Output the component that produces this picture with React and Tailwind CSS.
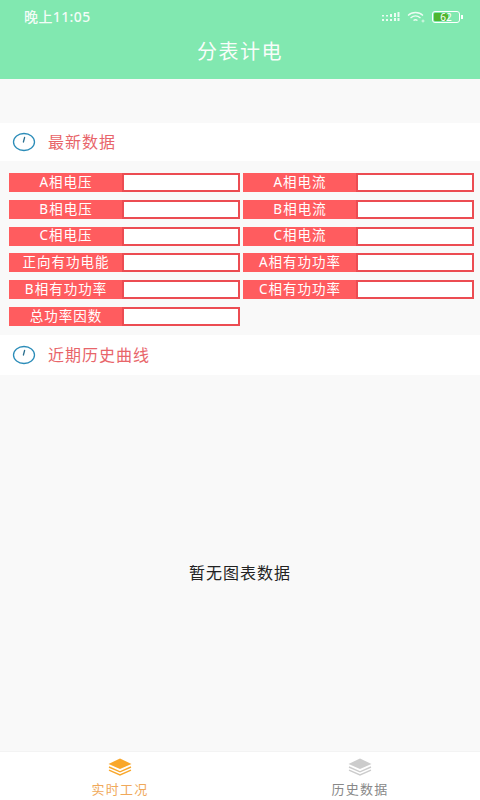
const cjk = { fontFamily: '"Noto Sans", "Noto Sans CJK SC", sans-serif' };

const fields = [
  ['A相电压', 'A相电流'],
  ['B相电压', 'B相电流'],
  ['C相电压', 'C相电流'],
  ['正向有功电能', 'A相有功功率'],
  ['B相有功功率', 'C相有功功率'],
  ['总功率因数'],
];

function Clock() {
  return (
    <svg width="24" height="20" viewBox="0 0 24 20" fill="none" className="shrink-0">
      <ellipse cx="12" cy="10" rx="10.5" ry="8.5" stroke="#2b8cb8" strokeWidth="1.3" />
      <path d="M12.6 5.5 L11.4 10" stroke="#2b6f8f" strokeWidth="1.3" strokeLinecap="round" />
    </svg>
  );
}

function SectionHead({ title, className }) {
  return (
    <div className={`flex items-center bg-white pl-3 ${className}`}>
      <Clock />
      <span className="ml-[12px] text-[16px] tracking-[1px] text-[#e8656a]">{title}</span>
    </div>
  );
}

function Field({ label }) {
  return (
    <div className="flex h-[19px] w-[231px] bg-[#ff5c5f]">
      <div className="flex w-[113px] shrink-0 items-center justify-center pl-[1px] text-[13.5px] tracking-[1px] text-white leading-none">
        {label}
      </div>
      <div className="flex-1 border-2 border-l-[2px] border-[#ec4c52] bg-white" />
    </div>
  );
}

function Layers({ color }) {
  return (
    <svg width="24" height="18" viewBox="0 0 24 18" fill="none">
      <path d="M12 0.5 L23.5 6 L12 11 L0.5 6 Z" fill={color} />
      <path d="M1 9 L12 13.8 L23 9" stroke={color} strokeWidth="1.4" />
      <path d="M1 12.2 L12 17 L23 12.2" stroke={color} strokeWidth="1.4" />
    </svg>
  );
}

export default function App() {
  return (
    <div className="flex h-[800px] w-[480px] flex-col overflow-hidden bg-[#f9f9f9]" style={cjk}>
      {/* header */}
      <div className="h-[79px] shrink-0 bg-[#81e8b0] text-white">
        <div className="flex h-[33px] items-center justify-between pl-[24px] pr-[17px]">
          <span className="text-[14px] font-medium tracking-[0.4px] opacity-90">晚上11:05</span>
          <div className="flex items-center gap-[7px]">
            <svg width="18" height="12" viewBox="0 0 18 12" fill="white" opacity="0.85">
              <rect x="0" y="8" width="2" height="2" />
              <rect x="0" y="4" width="2" height="1.5" />
              <rect x="4" y="8" width="2" height="2" />
              <rect x="4" y="4" width="2" height="1.5" />
              <rect x="8" y="8" width="2" height="2" />
              <rect x="8" y="3" width="2" height="3" />
              <rect x="12" y="7" width="2" height="3" />
              <rect x="12" y="2" width="2" height="4" />
              <rect x="15.5" y="7" width="2" height="3" />
              <rect x="15.5" y="1" width="2" height="5" />
            </svg>
            <svg width="18" height="12" viewBox="0 0 18 12" fill="none" stroke="white" opacity="0.85">
              <path d="M1 4.5 C5 0.5 12 0.5 16 4.5" strokeWidth="1.3" />
              <path d="M3.5 7 C6.5 4.5 10.5 4.5 13.5 7" strokeWidth="1.3" />
              <path d="M6.5 9.5 C7.8 8.5 9.2 8.5 10.5 9.5" strokeWidth="1.3" />
              <circle cx="16" cy="10" r="1" strokeWidth="0.8" />
            </svg>
            <div className="flex items-center">
              <div className="relative flex h-[12px] w-[28px] items-center rounded-[3px] border border-white p-[1px]">
                <div className="h-full w-[60%] rounded-[1px] bg-[#4fb52f]" />
                <span className="absolute inset-0 flex items-center justify-center text-[10px] leading-none text-white">62</span>
              </div>
              <div className="ml-[1px] h-[4px] w-[2px] bg-white" />
            </div>
          </div>
        </div>
        <div className="mt-[1px] text-center text-[20px] leading-[36px] tracking-[1.5px] opacity-95">分表计电</div>
      </div>

      <div className="h-[44px] shrink-0" />
      <SectionHead title="最新数据" className="h-[38px] shrink-0" />

      {/* data grid */}
      <div className="flex h-[171px] shrink-0 flex-col gap-[7.8px] pl-[9px] pt-[12px]">
        {fields.map((row) => (
          <div key={row[0]} className="flex gap-[3px]">
            {row.map((label) => (
              <Field key={label} label={label} />
            ))}
          </div>
        ))}
      </div>

      <div className="h-[3px] shrink-0" />
      <SectionHead title="近期历史曲线" className="h-[40px] shrink-0" />

      {/* chart area */}
      <div className="flex flex-1 items-center justify-center pt-[20px] text-[16px] tracking-[1px] text-[#222]">
        暂无图表数据
      </div>

      {/* tabs */}
      <div className="flex h-[49px] shrink-0 border-t border-[#f3f3f3] bg-white">
        <div className="flex w-1/2 flex-col items-center pt-[6px]">
          <Layers color="#f9a72b" />
          <span className="mt-[5px] text-[13px] leading-[16px] tracking-[1.2px] text-[#f0a95a]">实时工况</span>
        </div>
        <div className="flex w-1/2 flex-col items-center pt-[6px]">
          <Layers color="#cccccc" />
          <span className="mt-[5px] text-[13px] leading-[16px] tracking-[1.2px] text-[#888]">历史数据</span>
        </div>
      </div>
    </div>
  );
}
